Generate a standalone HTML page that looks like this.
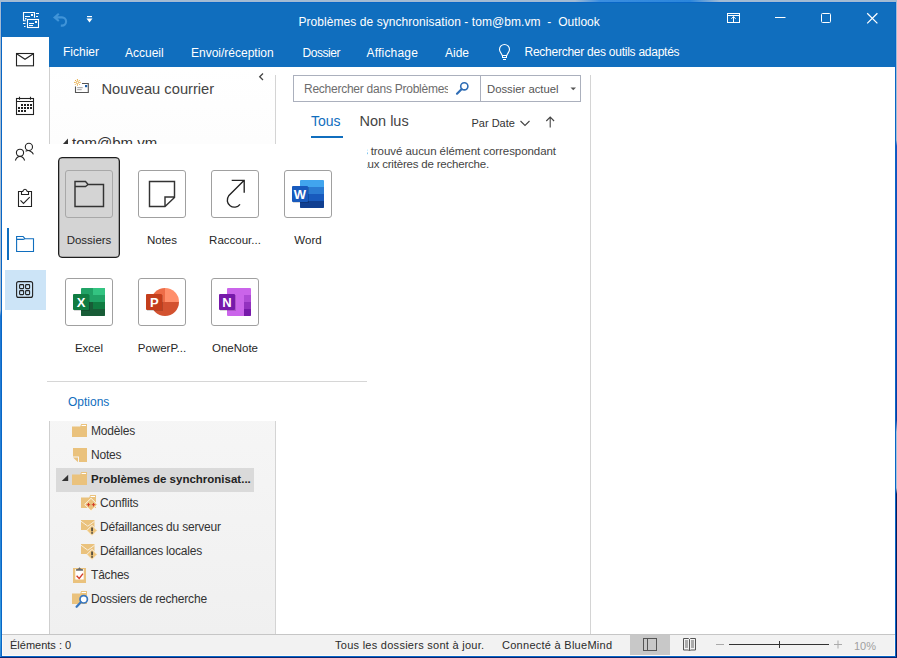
<!DOCTYPE html>
<html><head><meta charset="utf-8">
<style>
*{margin:0;padding:0;box-sizing:border-box}
html,body{width:897px;height:658px;overflow:hidden;background:#a6bdd3}
body{position:relative;font-family:"Liberation Sans",sans-serif;color:#444}
.a{position:absolute;white-space:nowrap}
svg{position:absolute;overflow:visible}
#bg2{position:absolute;left:0;top:0;width:897px;height:658px;background:#a3bbd3}
#frame{position:absolute;left:1px;top:2px;width:895px;height:655px;border:1px solid #0866c6;background:#fff}
#title{position:absolute;left:2px;top:3px;width:893px;height:64px;background:#106ebe}
.wt{position:absolute;color:#fff;font-size:12px;white-space:nowrap;line-height:14px}
#side{position:absolute;left:2px;top:37px;width:47px;height:597px;background:#fff}
#sideb{position:absolute;left:49px;top:67px;width:1px;height:567px;background:#cfcfcf}
#nav{position:absolute;left:50px;top:67px;width:225px;height:567px;background:linear-gradient(#fff,#f0f0f0)}
#navsep{position:absolute;left:275px;top:75px;width:1px;height:559px;background:#d4d4d4}
#listsep{position:absolute;left:590px;top:75px;width:1px;height:559px;background:#d4d4d4}
#status{position:absolute;left:2px;top:634px;width:893px;height:22px;background:#f2f2f2;border-left:1px solid #fffaf5;border-bottom:1px solid #fffaf5;border-right:1px solid #fffaf5}
#statusl{position:absolute;left:2px;top:634px;width:893px;height:1px;background:#c6c6c6}
#popup{position:absolute;left:48px;top:144px;width:319px;height:277px;background:#fff;z-index:10}
.tile{position:absolute;width:48px;height:48px;border:1px solid #a0a0a0;border-radius:3px;background:#fff}
.lbl{position:absolute;font-size:11.5px;color:#262626;text-align:center;width:80px;line-height:14px}
.fl{position:absolute;font-size:12px;color:#333;white-space:nowrap;line-height:14px;letter-spacing:-0.2px}
.st{position:absolute;font-size:11px;color:#2b2b2b;white-space:nowrap;line-height:13px}
</style></head><body>
<div id="bg2"></div>
<div class="a" style="left:0;top:0;width:1px;height:658px;background:linear-gradient(#a3bbd3 0,#a3bbd3 310px,#2078d2 316px,#2a86d6 560px,#3a9fe0 640px,#2a80d8 658px)"></div>
<div class="a" style="left:896px;top:0;width:1px;height:658px;background:linear-gradient(#a3bbd3 0,#a3bbd3 140px,#1a50c0 146px,#0d3aa0 420px,#a8c0da 432px,#a8c0da 488px,#0a1a5a 494px,#0a1a5a 658px)"></div>
<div class="a" style="left:0;top:0;width:897px;height:2px;background:linear-gradient(90deg,#a3bbd3 0,#a3bbd3 575px,#3a8ee0 600px,#2a86dc 690px,#a3bbd3 720px,#a3bbd3 897px)"></div>
<div class="a" style="left:0;top:657px;width:897px;height:1px;background:#0b2470"></div>
<div id="frame"></div>
<div id="title"></div>

<!-- QAT icons -->
<svg style="left:0;top:0" width="897" height="67">
 <g fill="none" stroke="#fff" stroke-width="1.1">
  <path d="M25.8 20.7h-2.3v-8.2h11v5.2"/>
  <rect x="27.5" y="19.5" width="11" height="8"/>
 </g>
 <g fill="#fff">
  <rect x="31" y="14" width="2" height="2"/><rect x="25" y="16" width="5" height="1"/><rect x="25" y="18" width="1.5" height="1.5"/>
  <rect x="35" y="21" width="2" height="2"/><rect x="29" y="23" width="5" height="1"/><rect x="29" y="25" width="4" height="1"/>
  <rect x="36" y="13" width="3" height="1"/><rect x="36" y="16" width="2" height="1"/>
  <rect x="23" y="23" width="2.5" height="1"/><rect x="24" y="26" width="1.5" height="1"/>
 </g>
 <path d="M58.8 13.8l-4.2 3.6 4.2 3.6M55.5 17.4h6.5a4.1 4.1 0 0 1 0 8.2h-1.2" fill="none" stroke="#4094d8" stroke-width="2.1"/>
 <rect x="87" y="16" width="5" height="1.2" fill="#fff"/>
 <path d="M86.5 18.5h6l-3 4z" fill="#fff"/>
 <!-- window controls -->
 <g fill="none" stroke="#fff" stroke-width="1">
  <rect x="727.5" y="13.5" width="12" height="9"/>
  <path d="M727.5 15.5h12M733.5 22.5v-6M731.3 18.8l2.2-2.2 2.2 2.2"/>
  <path d="M775 17.5h10.5"/>
  <rect x="821.5" y="13.5" width="9" height="9" rx="1"/>
  <path d="M867.2 13.2l10.2 10.2M877.4 13.2l-10.2 10.2" stroke-width="1.25"/>
 </g>
 <!-- bulb -->
 <path d="M502.2 55.5C501.8 53.5 499.5 52.2 499.5 49.5a5 5 0 0 1 10 0c0 2.7-2.3 4-2.7 6z" fill="none" stroke="#fff" stroke-width="1.1"/>
 <rect x="502.5" y="55.5" width="4" height="2" fill="none" stroke="#fff" stroke-width="1"/>
 <rect x="503" y="59" width="3" height="1" fill="#fff"/>
</svg>

<div class="wt" style="left:298.5px;top:15px;letter-spacing:0.06px">Problèmes de synchronisation - tom@bm.vm&nbsp; -&nbsp; Outlook</div>
<div class="wt" style="left:63px;top:45px">Fichier</div>
<div class="wt" style="left:125px;top:46px">Accueil</div>
<div class="wt" style="left:191px;top:46px">Envoi/réception</div>
<div class="wt" style="left:302.5px;top:46px;letter-spacing:-0.45px">Dossier</div>
<div class="wt" style="left:366.5px;top:46px;letter-spacing:0.2px">Affichage</div>
<div class="wt" style="left:445px;top:46px">Aide</div>
<div class="wt" style="left:524.5px;top:45px;letter-spacing:-0.25px">Rechercher des outils adaptés</div>

<div id="side"></div>
<div id="sideb"></div>
<div id="nav"></div>
<div id="navsep"></div>
<div id="listsep"></div>

<!-- sidebar icons -->
<svg style="left:0;top:0" width="50" height="320">
 <g fill="none" stroke="#222" stroke-width="1.1">
  <rect x="16.5" y="53.5" width="17" height="12.3"/>
  <path d="M17 54l8 5.3 8-5.3"/>
  <rect x="16.5" y="98.5" width="17" height="16"/>
  <path d="M16.5 101.5h17M19.5 96.8v3M30.5 96.8v3"/>
  <circle cx="28.9" cy="146.9" r="3.6"/>
  <path d="M25.6 151.2c1.5-.8 3.5-.8 4.8 0 1.4.8 2.6 2 3 3.2"/>
  <circle cx="20" cy="152.8" r="3.6"/>
  <path d="M15.4 160.5c.8-2.6 2.6-4 4.6-4s3.8 1.4 4.6 4"/>
  <path d="M21.5 191.5h-3v15h13v-15h-3M21.5 191.5v3h7v-3h-1.2c-.5-1.5-1.2-2.2-2.3-2.2s-1.8.7-2.3 2.2z"/>
  <path d="M20.5 200.3l3 3.2 6.2-6.3"/>
 </g>
 <g fill="#222">
  <rect x="21" y="104" width="2" height="2"/><rect x="24" y="104" width="2" height="2"/><rect x="27" y="104" width="2" height="2"/><rect x="30" y="104" width="2" height="2"/>
  <rect x="18" y="107" width="2" height="2"/><rect x="21" y="107" width="2" height="2"/><rect x="24" y="107" width="2" height="2"/><rect x="27" y="107" width="2" height="2"/><rect x="30" y="107" width="2" height="2"/>
  <rect x="18" y="110" width="2" height="2"/><rect x="21" y="110" width="2" height="2"/><rect x="24" y="110" width="2" height="2"/>
 </g>
 <rect x="7" y="228" width="2" height="32" fill="#106ebe"/>
 <path d="M16.6 251.5V236.5h6.5l1.8 2.2h8.6v12.8z M16.6 239.4h6.5l1.8-.7" fill="none" stroke="#106ebe" stroke-width="1.1"/>
 <rect x="5" y="270" width="41" height="40" fill="#cce4f7"/>
 <g fill="none" stroke="#222" stroke-width="1.1">
  <rect x="16.6" y="281.6" width="16" height="15.8" rx="2"/>
  <rect x="19.6" y="284.6" width="4" height="4" rx=".8"/><rect x="25.6" y="284.6" width="4" height="4" rx=".8"/>
  <rect x="19.6" y="290.6" width="4" height="4" rx=".8"/><rect x="25.6" y="290.6" width="4" height="4" rx=".8"/>
 </g>
</svg>

<!-- nav pane top -->
<svg style="left:0;top:0" width="280" height="150">
 <path d="M82 83.5h6.3v9h-12.8v-6" fill="none" stroke="#555" stroke-width="1.1"/>
 <rect x="85" y="85" width="2.2" height="2.2" fill="#1f5fa8"/>
 <path d="M77.2 87.7h5.5M77.2 89.7h4.5" stroke="#888" stroke-width=".8"/>
 <g stroke="#e8b04e" stroke-width="1" fill="none">
  <circle cx="77.4" cy="82.4" r="1.2"/>
  <path d="M77.4 79v1.6M77.4 84.2v1.6M74 82.4h1.6M79.2 82.4h1.6M75 80l1 1M78.8 83.8l1 1M79.8 80l-1 1M76 83.8l-1 1"/>
 </g>
 <path d="M263 73.5l-3.3 3.2 3.3 3.3" fill="none" stroke="#444" stroke-width="1.3"/>
 <path d="M62.5 144.5l5.5-6v6z" fill="#333"/>
</svg>
<div class="a" style="left:101.5px;top:81px;font-size:14.7px;color:#444;line-height:17px">Nouveau courrier</div>
<div class="a" style="left:72px;top:134px;font-size:15px;color:#333;line-height:17px">tom@bm.vm</div>

<!-- search box -->
<div class="a" style="left:293px;top:75px;width:288px;height:27px;border:1px solid #abb0bd;background:#fff"></div>
<div class="a" style="left:480px;top:76px;width:1px;height:25px;background:#abb0bd"></div>
<div class="a" style="left:304px;top:82px;width:144px;overflow:hidden;font-size:12px;letter-spacing:-0.25px;color:#6d6d6d;line-height:14px">Rechercher dans Problèmes de synchronisation</div>
<svg style="left:0;top:0" width="600" height="140">
 <circle cx="464.3" cy="86.3" r="3.6" fill="none" stroke="#2f6db5" stroke-width="1.6"/>
 <path d="M461.5 89.2l-4.5 4.5" stroke="#2f6db5" stroke-width="2.2" stroke-linecap="round"/>
 <path d="M570.5 87.5h5.5l-2.75 2.8z" fill="#555"/>
 <path d="M520.5 121l4.5 4.5 4.5-4.5" fill="none" stroke="#444" stroke-width="1.1"/>
 <path d="M550.2 117v10.6M546.3 121l3.9-4 3.9 4" fill="none" stroke="#444" stroke-width="1.1"/>
 <rect x="311" y="136" width="32" height="2" fill="#106ebe"/>
</svg>
<div class="a" style="left:487px;top:82px;font-size:11.3px;color:#555;line-height:14px">Dossier actuel</div>
<div class="a" style="left:311px;top:113px;font-size:14px;color:#106ebe;line-height:17px">Tous</div>
<div class="a" style="left:359.5px;top:113px;font-size:14.5px;color:#444;line-height:17px">Non lus</div>
<div class="a" style="left:471.5px;top:117px;font-size:11px;color:#333;line-height:13px">Par Date</div>
<div class="a" style="left:200px;top:145px;width:356px;text-align:right;font-size:11.5px;letter-spacing:-0.06px;color:#444;line-height:13px">Nous n'avons trouvé aucun élément correspondant</div>
<div class="a" style="left:200px;top:158px;width:289px;text-align:right;font-size:11.5px;letter-spacing:-0.2px;color:#444;line-height:13px">correspondant aux critères de recherche.</div>

<!-- folder list -->
<div class="a" style="left:56px;top:468px;width:198px;height:24px;background:#dadada"></div>
<svg style="left:0;top:0" width="280" height="620">
 <defs>
  <g id="fold"><path d="M0 13V2.5h8.2l1-2.5h5.8v13z" fill="#eac27d"/><rect x="9.6" y="1" width="4.4" height="1" fill="#fff"/></g>
 </defs>
 <use href="#fold" x="72" y="424"/>
 <path d="M73 448h14v14h-8v-5.6h-6z" fill="#eac27d"/>
 <path d="M73 457.4h5v4.8z" fill="#eac27d"/>
 <path d="M61.8 481l6.4-6.2v6.2z" fill="#333"/>
 <use href="#fold" x="72" y="472"/>
 <!-- conflits -->
 <use href="#fold" x="81" y="495"/>
 <path d="M91 498.3l6.3 6.2-6.3 6.3-6.3-6.3z" fill="#eac27d" stroke="#fdf6ea" stroke-width="1"/>
 <path d="M86.8 504.7h3.4M88.5 503v3.4M91.8 504.7h3.4M93.5 503v3.4" stroke="#d23b2a" stroke-width="1"/>
 <!-- defaillances -->
 <g id="defa">
  <path d="M81 520h13.5v10h-13.5z" fill="#eac27d"/>
  <path d="M81 521.2l6.8 5 6.8-5" fill="none" stroke="#f8eedd" stroke-width="1"/>
  <path d="M92 525.3l5.2 5.2-5.2 5.2-5.2-5.2z" fill="#f0c77e" stroke="#f8f1e6" stroke-width="1"/>
  <rect x="91.3" y="527.5" width="1.5" height="3.8" fill="#333"/><rect x="91.3" y="532.2" width="1.5" height="1.5" fill="#333"/>
 </g>
 <use href="#defa" x="0" y="24"/>
 <!-- taches -->
 <rect x="73" y="568" width="13" height="15" fill="#eac27d"/>
 <rect x="75.3" y="569" width="8.4" height="10.5" fill="#fff"/>
 <path d="M76 570.8h7v-1.5l-2.2-.6-1.3-1.5-1.3 1.5-2.2.6z" fill="#6b6b6b"/>
 <path d="M76.6 575.8l2.6 2.6 3.8-4.8" fill="none" stroke="#d23b2a" stroke-width="1.4"/>
 <!-- search folders -->
 <use href="#fold" x="72" y="591"/>
 <circle cx="83.7" cy="599.3" r="3.7" fill="#fff" stroke="#3a78c0" stroke-width="1.7"/>
 <path d="M80.8 602.3l-4.2 4.4" stroke="#3a78c0" stroke-width="2.3" stroke-linecap="round"/>
</svg>
<div class="fl" style="left:91px;top:424px">Modèles</div>
<div class="fl" style="left:91px;top:448px">Notes</div>
<div class="fl" style="left:91px;top:472px;font-weight:bold;color:#222;font-size:11.5px;letter-spacing:0">Problèmes de synchronisat...</div>
<div class="fl" style="left:100px;top:496px">Conflits</div>
<div class="fl" style="left:100px;top:520px">Défaillances du serveur</div>
<div class="fl" style="left:100px;top:544px">Défaillances locales</div>
<div class="fl" style="left:91px;top:568px">Tâches</div>
<div class="fl" style="left:91px;top:592px">Dossiers de recherche</div>

<!-- status bar -->
<div id="status"></div><div id="statusl"></div>
<div class="st" style="left:10px;top:639px">Éléments : 0</div>
<div class="st" style="left:335px;top:639px;letter-spacing:0.27px">Tous les dossiers sont à jour.</div>
<div class="st" style="left:502px;top:639px;letter-spacing:0.27px">Connecté à BlueMind</div>
<div class="a" style="left:630px;top:635px;width:40px;height:20px;background:#c8c8c8"></div>
<svg style="left:0;top:0" width="897" height="658">
 <g fill="none" stroke="#555" stroke-width="1">
  <rect x="643.5" y="638.5" width="13" height="12"/>
  <path d="M647.5 638.5v12"/>
  <path d="M683.5 638.5h5l1 1 1-1h5v11.5h-5l-1 1-1-1h-5z M689.5 639.5v11"/><path d="M685 641h3M685 643h3M685 645h3M685 647h3M691 641h3M691 643h3M691 645h3M691 647h3" stroke="#666"/>
 </g>
 <path d="M716 644.5h8M834 644.5h8M838 640.5v8" stroke="#aaa" stroke-width="1"/>
 <path d="M729 644.5h100" stroke="#333" stroke-width="1"/>
 <path d="M779.5 641v7" stroke="#333" stroke-width="1"/>
</svg>
<div class="st" style="left:854px;top:640px;color:#a0a0a0">10%</div>

<!-- popup -->
<div id="popup">
 <div class="a" style="left:10px;top:13px;width:62px;height:101px;background:#d4d4d4;border:1px solid #1e1e1e;border-radius:4px;box-shadow:inset 0 0 0 .3px #1e1e1e"></div>
 <div class="tile" style="left:17px;top:26px;background:#d4d4d4;border-color:#a8a8a8"></div>
 <div class="tile" style="left:90px;top:26px"></div>
 <div class="tile" style="left:163px;top:26px"></div>
 <div class="tile" style="left:236px;top:26px"></div>
 <div class="tile" style="left:17px;top:134px"></div>
 <div class="tile" style="left:90px;top:134px"></div>
 <div class="tile" style="left:163px;top:134px"></div>
 <svg style="left:0;top:0" width="319" height="277">
  <g fill="none" stroke="#333" stroke-width="1.45">
   <path d="M27 62.5V37.5h10.5l2.6 3h15.4v22z M27 42.5h10.5l2.6-2"/>
   <path d="M101.5 37.5h25v16l-9.5 9h-15.5z M117 62.5v-9.5h9.5"/>
  </g>
  <g fill="none" stroke="#222" stroke-width="1.35">
   <path d="M183.7 36.3h12.5v12.5M196.2 36.3l-15.5 15.5a7 7 0 1 0 11.3 8.5"/>
  </g>
  <!-- word -->
  <g transform="translate(236,26)">
   <rect x="16" y="10" width="24" height="28" rx="1" fill="#41a5ee"/>
   <rect x="16" y="17" width="24" height="7" fill="#2b7cd3"/>
   <rect x="16" y="24" width="24" height="7" fill="#185abd"/>
   <path d="M16 31h24v6a1 1 0 0 1-1 1H17a1 1 0 0 1-1-1z" fill="#103f91"/>
   <rect x="9" y="17" width="16" height="16" fill="#000" opacity=".15"/>
   <rect x="8" y="16" width="16" height="16" rx="1" fill="#185abd"/>
   <text x="16" y="28.8" text-anchor="middle" font-family="Liberation Sans" font-weight="bold" font-size="13" fill="#fff">W</text>
  </g>
  <!-- excel -->
  <g transform="translate(17,134)">
   <rect x="16" y="10" width="24" height="28" rx="1" fill="#21a366"/>
   <path d="M28 10h11a1 1 0 0 1 1 1v6h-12z" fill="#33c481"/>
   <rect x="16" y="24" width="24" height="7" fill="#107c41"/>
   <rect x="16" y="24" width="12" height="7" fill="#185c37"/>
   <path d="M16 31h24v6a1 1 0 0 1-1 1H17a1 1 0 0 1-1-1z" fill="#185c37"/>
   <rect x="9" y="17" width="16" height="16" fill="#000" opacity=".15"/>
   <rect x="8" y="16" width="16" height="16" rx="1" fill="#107c41"/>
   <text x="16" y="28.8" text-anchor="middle" font-family="Liberation Sans" font-weight="bold" font-size="13" fill="#fff">X</text>
  </g>
  <!-- powerpoint -->
  <g transform="translate(90,134)">
   <path d="M27 24V10a14 14 0 0 1 14 14z" fill="#ff8f6b"/>
   <path d="M27 24V10a14 14 0 0 0-14 14z" fill="#ed6c47"/>
   <path d="M13 24a14 14 0 0 0 28 0z" fill="#d35230"/>
   <rect x="9" y="17" width="16" height="16" fill="#000" opacity=".15"/>
   <rect x="8" y="16" width="16" height="16" rx="1" fill="#c43e1c"/>
   <text x="16.3" y="28.8" text-anchor="middle" font-family="Liberation Sans" font-weight="bold" font-size="13" fill="#fff">P</text>
  </g>
  <!-- onenote -->
  <g transform="translate(163,134)">
   <rect x="16" y="10" width="24" height="28" rx="1" fill="#ca64ea"/>
   <rect x="33" y="17" width="7" height="7" fill="#ae4bd5"/>
   <rect x="33" y="24" width="7" height="7" fill="#9332bf"/>
   <path d="M33 31h7v6a1 1 0 0 1-1 1h-6z" fill="#7719aa"/>
   <rect x="9" y="17" width="16" height="16" fill="#000" opacity=".15"/>
   <rect x="8" y="16" width="16" height="16" rx="1" fill="#7719aa"/>
   <text x="16" y="28.8" text-anchor="middle" font-family="Liberation Sans" font-weight="bold" font-size="13" fill="#fff">N</text>
  </g>
 </svg>
 <div class="lbl" style="left:1px;top:89px">Dossiers</div>
 <div class="lbl" style="left:74px;top:89px">Notes</div>
 <div class="lbl" style="left:147px;top:89px">Raccour...</div>
 <div class="lbl" style="left:220px;top:89px">Word</div>
 <div class="lbl" style="left:1px;top:197px">Excel</div>
 <div class="lbl" style="left:74px;top:197px">PowerP...</div>
 <div class="lbl" style="left:147px;top:197px">OneNote</div>
 <div class="a" style="left:-1px;top:237px;width:320px;height:1px;background:#d6d6d6"></div>
 <div class="a" style="left:20px;top:251px;font-size:12px;color:#106ebe;line-height:14px">Options</div>
</div>
</body></html>
